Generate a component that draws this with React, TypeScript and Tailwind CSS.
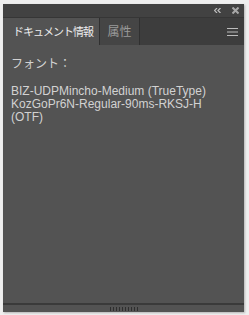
import React from "react";

const ui = { fontFamily: '"Liberation Sans", "Noto Sans CJK JP", sans-serif' };

export default function App() {
  return (
    <div className="w-[249px] h-[315px] bg-[#efefef] pt-[4px] pl-[3px] pr-[5px] pb-[3px]" style={ui}>
      <div className="flex h-full flex-col bg-[#535353] shadow-[1px_1px_2px_rgba(0,0,0,0.25)]">
        {/* title bar */}
        <div className="flex h-[13px] items-center justify-end gap-[11px] bg-[#424242] pr-[5px]">
          <svg width="7" height="5" viewBox="0 0 7 5" className="text-[#bdbdbd]">
            <path d="M3 0 L0.5 2.5 L3 5 M6.5 0 L4 2.5 L6.5 5" stroke="currentColor" strokeWidth="1.2" fill="none" />
          </svg>
          <svg width="7" height="7" viewBox="0 0 7 7" className="text-[#a8a8a8]">
            <path d="M0.5 0.5 L6.5 6.5 M6.5 0.5 L0.5 6.5" stroke="currentColor" strokeWidth="2" />
          </svg>
        </div>

        {/* tab row */}
        <div className="flex h-[28px] items-stretch border-t border-[#363636] bg-[#3d3d3d]">
          <div className="flex w-[96px] items-center whitespace-nowrap bg-[#535353] pl-[10px] pt-[1px] text-[11px] tracking-[-1px] text-[#ededed]">
            ドキュメント情報
          </div>
          <div className="flex w-[41px] items-center justify-center whitespace-nowrap border-x border-[#303030] bg-[#454545] pt-[1px] text-[12px] text-[#9a9a9a]">
            属性
          </div>
          <div className="flex flex-1 items-center justify-end pr-[6px]">
            <svg width="11" height="8" viewBox="0 0 11 8" className="text-[#bcbcbc]">
              <path d="M0 0.5 H11 M0 4 H11 M0 7.5 H11" stroke="currentColor" strokeWidth="1" />
            </svg>
          </div>
        </div>

        {/* content */}
        <div className="flex-1 px-[8px] pt-[13px] text-[12px] leading-[13px] text-[#d2d2d2]">
          <div className="mb-[14px]">フォント：</div>
          <div className="whitespace-nowrap">BIZ-UDPMincho-Medium (TrueType)</div>
          <div className="whitespace-nowrap">KozGoPr6N-Regular-90ms-RKSJ-H</div>
          <div>(OTF)</div>
        </div>

        {/* bottom grip */}
        <div className="flex h-[9px] items-center justify-center border-t-2 border-[#3a3a3a] bg-[#535353]">
          <div className="flex gap-[2px]">
            {[0, 1, 2, 3, 4, 5, 6, 7, 8, 9].map((i) => (
              <div key={i} className="h-[4px] w-[1px] bg-[#2e2e2e]" />
            ))}
          </div>
        </div>
      </div>
    </div>
  );
}
